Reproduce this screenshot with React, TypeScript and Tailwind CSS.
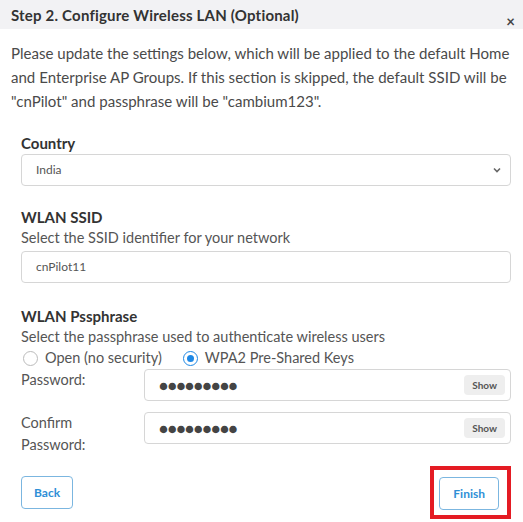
import React from 'react';

const font = { fontFamily: 'Lato, "Open Sans", "Liberation Sans", sans-serif' };

const ShowButton: React.FC = () => (
  <button className="absolute right-[5px] top-1/2 -translate-y-1/2 h-[20px] px-[8px] rounded bg-[#eeeeee] text-[10px] font-bold text-[#555]">
    Show
  </button>
);

const PasswordField: React.FC = () => (
  <div className="relative flex-1 h-[32px] border border-[#d6d6d6] rounded-[4px] flex items-center pl-[14px]">
    <span className="text-[15px] tracking-[-0.3px] text-[#444] leading-none">●●●●●●●●●</span>
    <ShowButton />
  </div>
);

export default function App() {
  return (
    <div className="w-[523px] h-[522px] bg-white text-[#4a4a4a] overflow-hidden" style={font}>
      <div className="h-[29px] bg-[#f2f2f4] flex items-start justify-between pl-[11px] pr-[8px]">
        <h2 className="text-[15px] tracking-[0.2px] font-bold text-[#333] mt-[4px]">Step 2. Configure Wireless LAN (Optional)</h2>
        <span className="text-[15px] font-bold text-[#444] mt-[10px]">×</span>
      </div>

      <p className="pl-[11px] pr-[2px] mt-[12px] text-[15.05px] leading-[24px] text-[#4a4a4a]">
        Please update the settings below, which will be applied to the default Home and Enterprise AP Groups. If this
        section is skipped, the default SSID will be "cnPilot" and passphrase will be "cambium123".
      </p>

      <div className="pl-[21px] pr-[12px] mt-[20px] flex flex-col">
        <label className="text-[15px] font-bold text-[#333] leading-[20px]">Country</label>
        <div className="mt-[1px] h-[32px] border border-[#d6d6d6] rounded-[4px] flex items-center justify-between pl-[14px] pr-[8px]">
          <span className="text-[12px] text-[#555]">India</span>
          <svg width="10" height="10" viewBox="0 0 10 10" fill="none" stroke="#666" strokeWidth="1.6">
            <path d="M2 3.5 L5 6.5 L8 3.5" />
          </svg>
        </div>

        <label className="mt-[21px] text-[15px] font-bold text-[#333] leading-[20px]">WLAN SSID</label>
        <div className="text-[14.5px] leading-[22px] text-[#555]">Select the SSID identifier for your network</div>
        <div className="mt-[2px] h-[32px] border border-[#d6d6d6] rounded-[4px] flex items-center pl-[14px]">
          <span className="text-[12px] text-[#555]">cnPilot11</span>
        </div>

        <label className="mt-[23px] text-[15px] font-bold text-[#333] leading-[20px]">WLAN Pssphrase</label>
        <div className="text-[14.5px] leading-[22px] text-[#555]">Select the passphrase used to authenticate wireless users</div>
        <div className="flex items-center text-[14.5px] text-[#555] leading-[20px]">
          <span className="w-[15px] h-[15px] rounded-full border border-[#bbb] ml-[2px] mr-[7px]" />
          <span>Open (no security)</span>
          <span className="ml-[21px] w-[15px] h-[15px] rounded-full border-[1.5px] border-[#1e88e5] flex items-center justify-center mr-[7px]">
            <span className="w-[7px] h-[7px] rounded-full bg-[#1e88e5]" />
          </span>
          <span>WPA2 Pre-Shared Keys</span>
        </div>

        <div className="flex items-start mt-[1px]">
          <span className="w-[123px] text-[14.5px] text-[#555] leading-[22px]">Password:</span>
          <PasswordField />
        </div>
        <div className="flex items-start mt-[11px]">
          <span className="w-[123px] text-[14.5px] text-[#555] leading-[22px]">
            Confirm
            <br />
            Password:
          </span>
          <PasswordField />
        </div>

        <div className="flex justify-between items-center mt-[10px]">
          <button className="h-[33px] px-[12px] border-[1.5px] border-[#7bb6e0] rounded-[4px] text-[12px] font-bold text-[#2f8fd6]">
            Back
          </button>
          <div className="border-[4px] border-[#e41b23] pl-[5px] pr-[8px] pt-[7px] pb-[5px]">
            <button className="h-[33px] px-[13px] border-[1.5px] border-[#7bb6e0] rounded-[4px] text-[12px] font-bold text-[#2f8fd6] bg-white">
              Finish
            </button>
          </div>
        </div>
      </div>
    </div>
  );
}
